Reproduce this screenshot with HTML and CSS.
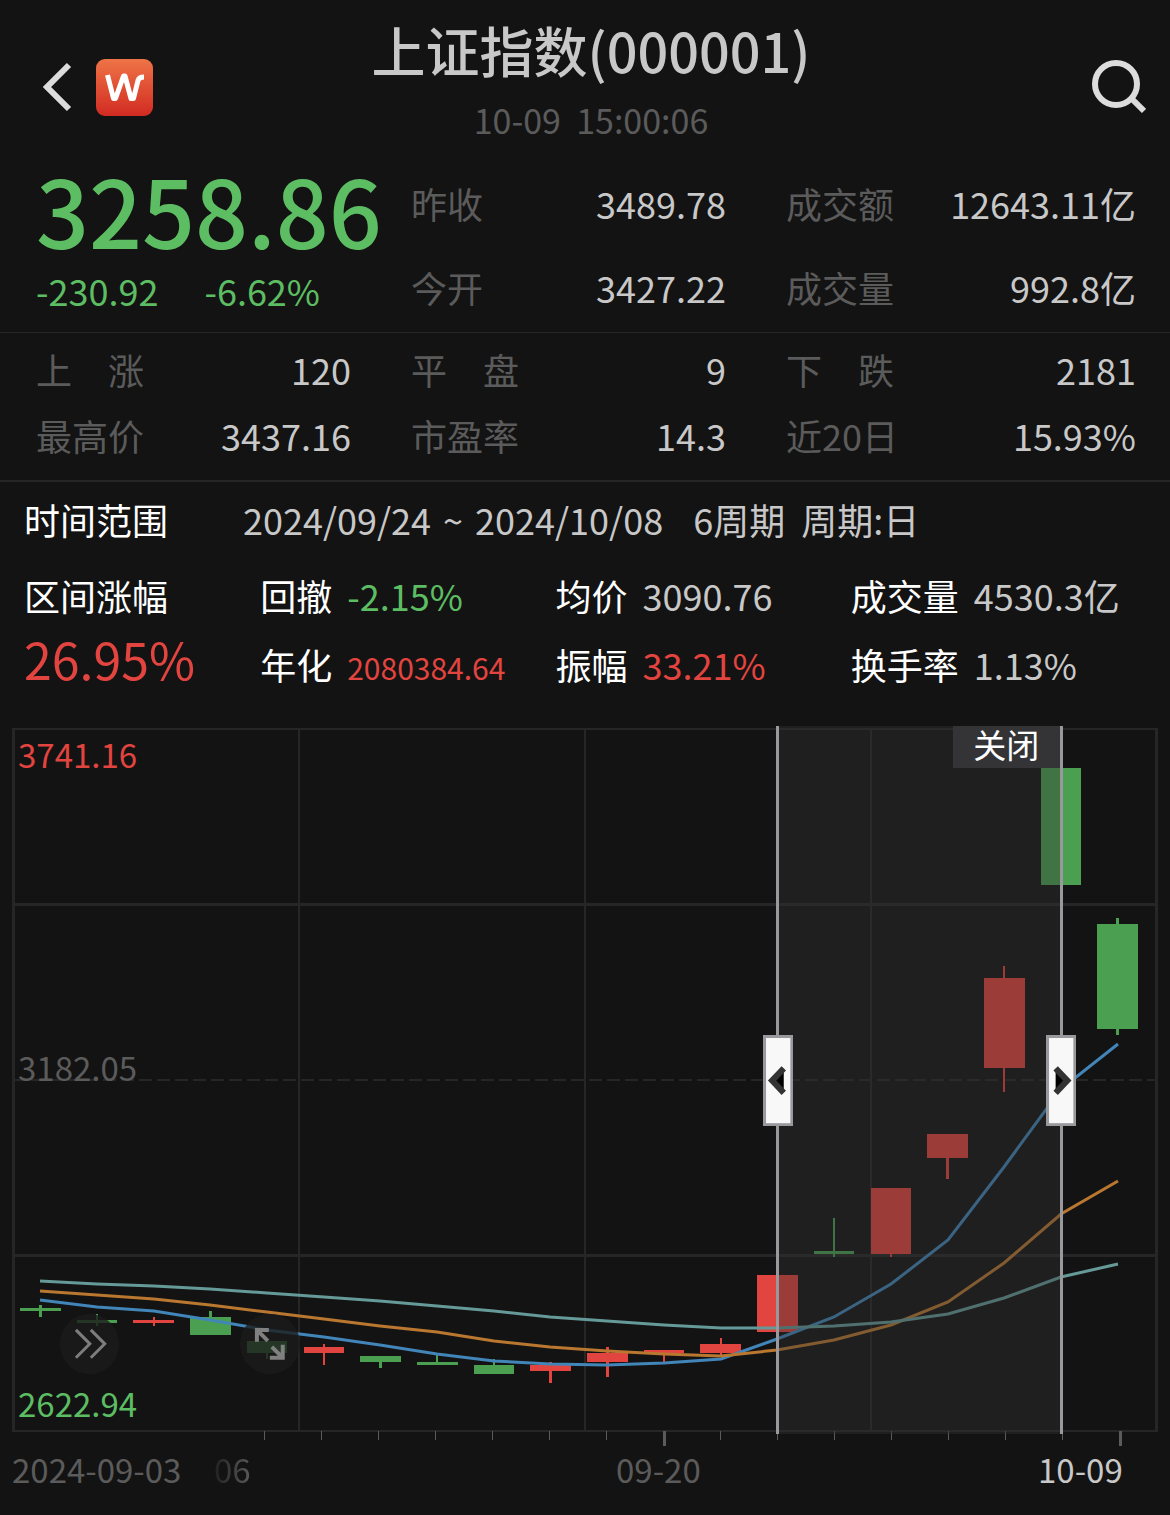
FILE: index.html
```html
<!DOCTYPE html>
<html lang="zh-CN">
<head>
<meta charset="utf-8">
<meta name="viewport" content="width=device-width, initial-scale=1">
<title>上证指数(000001)</title>
<link rel="stylesheet" href="styles.css">
</head>
<body>
<header class="topbar">
  <div class="topbar-left">
    <button class="icon-button" type="button" aria-label="返回">
      <svg width="30" height="50" viewBox="0 0 30 50"><path d="M27 3 5 25l22 22" fill="none" stroke="#dcdcdc" stroke-width="6"/></svg>
    </button>
    <a class="brand" href="#" aria-label="首页">
      <svg width="57" height="57" viewBox="0 0 57 57">
        <defs><linearGradient id="brandFill" x1="0" y1="0" x2="0" y2="1"><stop offset="0" stop-color="#ee7446"/><stop offset="1" stop-color="#d22b22"/></linearGradient></defs>
        <rect width="57" height="57" rx="9" fill="url(#brandFill)"/>
        <path d="M11.500 16 17.500 39.500h2L27.500 17h1.500l6 22.500h2.500l4.500-18q1-3.500 6-3.500" fill="none" stroke="#fff" stroke-width="5" stroke-linejoin="round"/>
      </svg>
    </a>
  </div>
  <div class="topbar-title">
    <h1>上证指数(000001)</h1>
    <time>10-09&nbsp; 15:00:06</time>
  </div>
  <button class="icon-button search" type="button" aria-label="搜索">
    <svg width="56" height="56" viewBox="0 0 56 56"><circle cx="26" cy="25" r="21" fill="none" stroke="#dcdcdc" stroke-width="6"/><path d="m41 39 13 13" stroke="#dcdcdc" stroke-width="6"/></svg>
  </button>
</header>

<main>
  <section class="columns quote">
    <div class="price">
      <strong class="down">3258.86</strong>
      <p class="down"><span>-230.92</span><span>-6.62%</span></p>
    </div>
    <dl class="pair"><dt>昨收</dt><dd>3489.78</dd></dl>
    <dl class="pair"><dt>成交额</dt><dd>12643.11亿</dd></dl>
    <dl class="pair"><dt>今开</dt><dd>3427.22</dd></dl>
    <dl class="pair"><dt>成交量</dt><dd>992.8亿</dd></dl>
  </section>

  <section class="columns breadth">
    <dl class="pair"><dt>上　涨</dt><dd>120</dd></dl>
    <dl class="pair"><dt>平　盘</dt><dd>9</dd></dl>
    <dl class="pair"><dt>下　跌</dt><dd>2181</dd></dl>
    <dl class="pair"><dt>最高价</dt><dd>3437.16</dd></dl>
    <dl class="pair"><dt>市盈率</dt><dd>14.3</dd></dl>
    <dl class="pair"><dt>近20日</dt><dd>15.93%</dd></dl>
  </section>

  <section class="range">
    <div class="period">
      <h2>时间范围</h2>
      <p class="dates"><span>2024/09/24</span><span>~</span><span>2024/10/08</span></p>
      <p class="cycle"><span>6周期</span><span>周期:日</span></p>
    </div>
    <div class="stats">
      <dl class="gain"><dt>区间涨幅</dt><dd class="up">26.95%</dd></dl>
      <dl class="stat"><dt>回撤</dt><dd class="down">-2.15%</dd></dl>
      <dl class="stat"><dt>均价</dt><dd>3090.76</dd></dl>
      <dl class="stat"><dt>成交量</dt><dd>4530.3亿</dd></dl>
      <dl class="stat"><dt>年化</dt><dd class="up small">2080384.64</dd></dl>
      <dl class="stat"><dt>振幅</dt><dd class="up">33.21%</dd></dl>
      <dl class="stat"><dt>换手率</dt><dd>1.13%</dd></dl>
    </div>
  </section>

  <section class="chart" aria-label="日K线">
    <div class="plot">
      <svg class="canvas" viewBox="0 720 1170 730">
        <g class="grid">
          <path stroke-width="2" d="M12 729H1158M12 1431H1158M299 729V1431M585 729V1431M871 729V1431"/>
          <path stroke-width="3" d="M13.500 728V1432M1156.500 728V1432M13 904.500H1157M13 1255.500H1157"/>
          <path stroke-width="2" stroke-dasharray="13 5" d="M13 1080H1157"/>
        </g>
        <path class="tick" stroke-width="1" d="M264.500 1431v9M321.500 1431v9M378.500 1431v9M435.500 1431v9M492.500 1431v9M549.500 1431v9M606.500 1431v9M720.500 1431v9M777.500 1431v9M834.500 1431v9M891.500 1431v9M948.500 1431v9M1005.500 1431v9M1062.500 1431v9"/>
        <path class="tick" stroke-width="3" d="M664.500 1431v15M1120.500 1431v15"/>
        <g class="fall">
          <path d="M20 1308h41v3H20zM39 1305h3v12h-3z"/>
          <path d="M77 1320h40v3H77zM96 1314h2v12h-2z"/>
          <path d="M190 1317h41v18h-41zM209 1311h3v6h-3z"/>
          <path d="M247 1341h40v12h-40zM266 1353h2v6h-2z"/>
          <path d="M360 1356h41v6h-41zM379 1362h3v6h-3z"/>
          <path d="M417 1362h41v3h-41zM436 1355h2v7h-2z"/>
          <path d="M474 1365h40v9h-40zM493 1359h2v6h-2z"/>
          <path d="M814 1251h40v3h-40zM833 1218h2v39h-2z"/>
          <path d="M1041 768h40v117h-40z"/>
          <path d="M1097 924h41v105h-41zM1116 918h3v117h-3z"/>
        </g>
        <g class="rise">
          <path d="M133 1320h41v3h-41zM153 1317h2v9h-2z"/>
          <path d="M304 1347h40v6h-40zM323 1344h2v21h-2z"/>
          <path d="M530 1365h41v6h-41zM549 1362h3v21h-3z"/>
          <path d="M587 1353h41v9h-41zM606 1347h3v30h-3z"/>
          <path d="M644 1350h40v3h-40zM663 1353h2v11h-2z"/>
          <path d="M700 1344h41v9h-41zM720 1338h2v17h-2z"/>
          <path d="M757 1275h41v57h-41z"/>
          <path d="M871 1188h40v66h-40zM890 1254h2v3h-2z"/>
          <path d="M927 1134h41v24h-41zM946 1158h3v21h-3z"/>
          <path d="M984 978h41v90h-41zM1003 966h2v126h-2z"/>
        </g>
        <polyline class="ma blue" points="40,1300 97,1307 154,1311 210,1320 267,1330 324,1337 380,1345 437,1354 494,1361 550,1364 607,1365 664,1363 721,1359 777,1339 834,1317 891,1284 948,1240 1004,1167 1061,1089 1118,1044"/>
        <polyline class="ma orange" points="40,1291 97,1295 154,1299 210,1305 267,1312 324,1319 380,1326 437,1332 494,1341 550,1347 607,1351 664,1354 721,1356 777,1350 834,1340 891,1325 948,1302 1004,1263 1061,1214 1118,1181"/>
        <polyline class="ma teal" points="40,1281 97,1284 154,1286 210,1289 267,1293 324,1297 380,1301 437,1306 494,1311 550,1317 607,1321 664,1325 721,1328 777,1328 834,1326 891,1322 948,1314 1004,1298 1061,1277 1118,1264"/>
        <text class="level level-high" x="18" y="768">3741.16</text>
        <text class="level level-mid" x="18" y="1081">3182.05</text>
        <text class="level level-low" x="18" y="1417">2622.94</text>
        <rect class="window" x="777" y="726" width="284" height="708"/>
        <rect class="close-fill" x="953" y="726" width="108" height="42"/>
        <path class="edge" d="M777.500 726V1434M1061.500 726V1434"/>
      </svg>
      <button class="close" type="button">关闭</button>
      <button class="handle handle-start" type="button" aria-label="起始日期">
        <svg viewBox="0 0 30 90"><rect x="1.500" y="1.500" width="27" height="87" fill="#f8f8f8" stroke="#98989d" stroke-width="3"/><path d="M20.500 33 9 45l11.500 12" fill="#000" stroke="#333" stroke-width="6"/></svg>
      </button>
      <button class="handle handle-end" type="button" aria-label="结束日期">
        <svg viewBox="0 0 30 90"><rect x="1.500" y="1.500" width="27" height="87" fill="#f8f8f8" stroke="#98989d" stroke-width="3"/><path d="M9.500 33 21 45 9.500 57" fill="#000" stroke="#333" stroke-width="6"/></svg>
      </button>
      <button class="round round-forward" type="button" aria-label="前进">
        <svg viewBox="0 0 60 60"><path d="m16 16 14 14-14 14M31 16l14 14-14 14" fill="none" stroke="#7d7d7d" stroke-width="3"/></svg>
      </button>
      <button class="round round-expand" type="button" aria-label="全屏">
        <svg viewBox="0 0 60 60"><path d="M29 16H17v12M17 16l11 11M32 33l11 11M43 31v13H30" fill="none" stroke="#808080" stroke-width="4"/></svg>
      </button>
    </div>
    <div class="axis">
      <span>2024-09-03</span><span class="fading">06</span><span>09-20</span><span class="current">10-09</span>
    </div>
  </section>
</main>
</body>
</html>
```
FILE: styles.css
```css
* { box-sizing: border-box; }

body {
  margin: 0;
  background: #131313;
  color: #c8c8c8;
  font-family: "Noto Sans CJK SC", sans-serif;
  font-size: 36px;
  line-height: 48px;
}

h1, h2, p, dl, dd { margin: 0; }
h1, h2 { font-weight: 400; }
h2 { font-size: 36px; }

button {
  padding: 0;
  border: 0;
  background: none;
  color: inherit;
  font: inherit;
}

svg { display: block; }

.up { color: #e2443f; }
.down { color: #5dbd63; }

.topbar {
  display: grid;
  grid-template-columns: 1fr auto 1fr;
  align-items: center;
  padding: 14px 24px 10px 36px;
}
.topbar-left {
  display: flex;
  align-items: center;
  gap: 24px;
  padding-top: 20px;
  padding-left: 6px;
}
.topbar-title { text-align: center; }
.topbar-title h1 {
  font-size: 54px;
  font-weight: 500;
  line-height: 72px;
}
.topbar-title time {
  display: block;
  margin-top: 14px;
  color: #5b5b5b;
  font-size: 34px;
  line-height: 40px;
}
.search {
  justify-self: end;
  padding-top: 20px;
}

.columns {
  display: grid;
  grid-template-columns: 9fr 9fr 10fr;
  column-gap: 60px;
  padding-left: 36px;
  padding-right: 34px;
  border-bottom: 1px solid #262627;
}
.quote {
  grid-auto-rows: 84px;
  padding-top: 11px;
  padding-bottom: 3px;
}
.price {
  grid-row: span 2;
  min-width: 0;
}
.price strong {
  display: block;
  font-size: 93px;
  font-weight: 500;
  line-height: 96px;
}
.price p {
  display: flex;
  gap: 46px;
  margin-top: 9px;
}
.pair {
  display: flex;
  align-items: center;
  justify-content: space-between;
  white-space: nowrap;
}
.pair dt { color: #5b5b5b; }

.breadth {
  grid-auto-rows: 66px;
  padding-top: 3px;
  padding-bottom: 12px;
  border-bottom-width: 2px;
}

.range { padding: 9px 24px 18px; }
.range h2, .range dt { color: #fff; }
.period {
  display: flex;
  line-height: 56px;
}
.dates {
  display: flex;
  gap: 12px;
  margin-left: 75px;
}
.cycle {
  display: flex;
  gap: 16px;
  margin-left: 30px;
}
.stats {
  display: grid;
  grid-template-columns: 4fr 5fr 5fr 5fr;
  margin-top: 14px;
  line-height: 69px;
}
.gain { grid-row: span 2; }
.gain dd {
  font-size: 50px;
  line-height: 56px;
}
.stat {
  display: flex;
  align-items: baseline;
  gap: 15px;
  white-space: nowrap;
}
.stat .small { font-size: 30px; }

.plot { position: relative; }
.canvas {
  width: 100%;
  height: auto;
}
.grid { fill: none; stroke: #262627; }
.tick { stroke: #5b5b5b; }
.fall { fill: #4aa050; }
.rise { fill: #e2443f; }
.ma { fill: none; stroke-width: 3; }
.blue { stroke: #4285b8; }
.orange { stroke: #b97730; }
.teal { stroke: #659a99; }
.level { font-size: 33px; }
.level-high { fill: #e2443f; }
.level-mid { fill: #5b5b5b; }
.level-low { fill: #5dbd63; }
.window { fill: #313131; fill-opacity: .4; }
.close-fill { fill: #343437; }
.edge { stroke: #98989d; stroke-width: 3; }

.close, .handle, .round { position: absolute; }
.close {
  top: 0.8%;
  left: 81.4%;
  width: 9.2%;
  height: 5.8%;
  padding-bottom: 6px;
  color: #fff;
  font-size: 33px;
  line-height: 36px;
}
.handle {
  top: 43.1%;
  width: 2.6%;
}
.handle-start { left: 65.2%; }
.handle-end { left: 89.4%; }
.round {
  top: 81.4%;
  width: 5.1%;
  border-radius: 50%;
  background: rgba(27, 27, 27, .8);
}
.round-forward { left: 5.1%; }
.round-expand { left: 20.5%; }

.axis {
  display: grid;
  grid-template-columns: 202fr 402fr 422fr 90fr;
  padding: 0 42px 27px 12px;
  color: #5b5b5b;
  font-size: 33px;
  line-height: 38px;
  white-space: nowrap;
}
.fading {
  justify-self: start;
  -webkit-mask-image: linear-gradient(90deg, rgba(0, 0, 0, .2), #000);
  mask-image: linear-gradient(90deg, rgba(0, 0, 0, .2), #000);
}
.current { color: #c8c8c8; }
```
